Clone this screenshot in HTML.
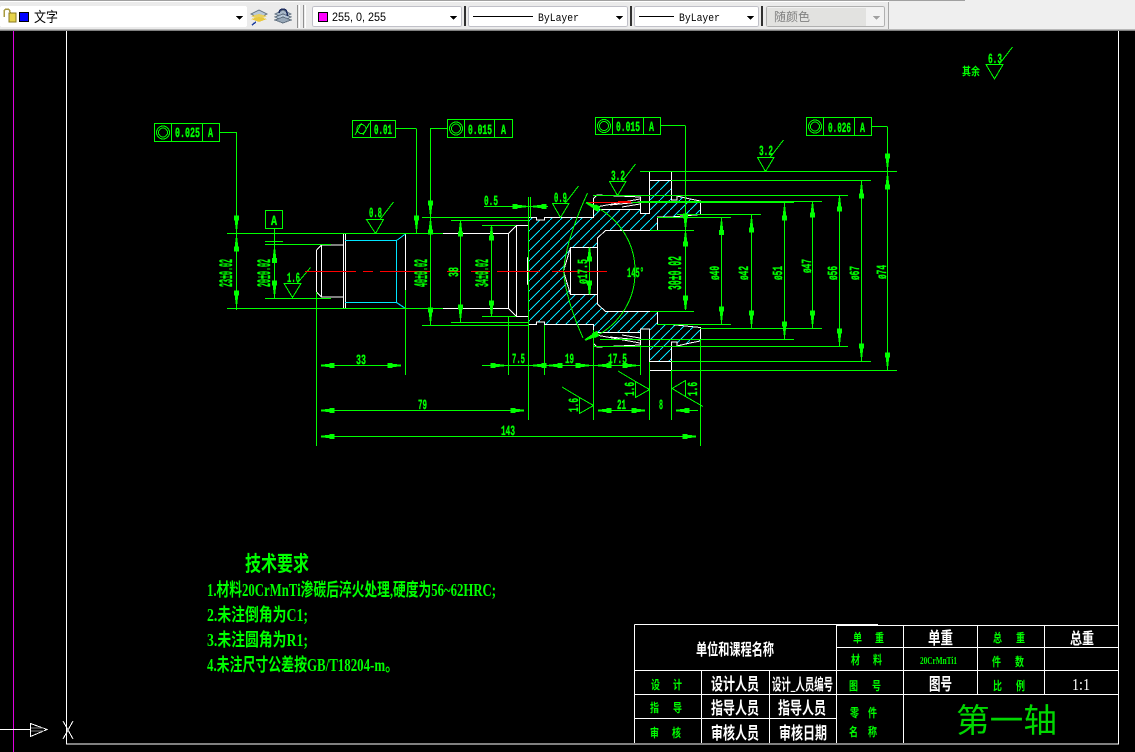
<!DOCTYPE html>
<html lang="zh"><head><meta charset="utf-8"><title>CAD</title>
<style>
html,body{margin:0;padding:0;background:#000;overflow:hidden}
svg{display:block}
text{font-family:"Liberation Sans","WenQuanYi Zen Hei","Noto Sans CJK SC",sans-serif}
.g{stroke:#00ff00;fill:none}
.w{stroke:#fff;fill:none}
.c{stroke:#00e5ff;fill:none}
.r{stroke:#ff0000;fill:none}
.t text{fill:#00ff00;font-weight:bold}
.n text{fill:#fff;font-weight:bold}
.dim text{fill:#00ff00;stroke:#00ff00;stroke-width:.35px;font-family:"Liberation Mono",monospace;font-weight:bold;font-size:14px}
.cjk text{font-family:"Liberation Serif","WenQuanYi Zen Hei","Noto Sans CJK SC",sans-serif}
</style></head><body>
<svg width="1135" height="752" viewBox="0 0 1135 752" xmlns="http://www.w3.org/2000/svg" shape-rendering="crispEdges">
<defs>
<path id="a" d="M-2.5,-13.5h5v5h-.8l-.9,8.5h-1.600l-.9,-8.500h-.8z" fill="#00ff00"/>
<pattern id="h" width="10" height="10" patternUnits="userSpaceOnUse"><path d="M0,10L10,0" stroke="#00e5ff" stroke-width="1" fill="none"/></pattern>
<g id="con"><circle cx="0" cy="0" r="6.5" class="g"/><circle cx="0" cy="0" r="4.500" class="g"/></g>
<path id="da" d="M0,0h7l-3.5,4z" fill="#000"/>
</defs>

<!-- toolbar -->
<rect x="0" y="0" width="1135" height="31" fill="#efefef"/>
<rect x="0" y="0" width="965" height="1" fill="#a0a0a0"/>
<rect x="0" y="1" width="889" height="1" fill="#fff"/>
<rect x="0" y="2" width="889" height="27" fill="#ebebeb"/>
<rect x="889" y="2" width="246" height="27" fill="#efefef"/>
<rect x="0" y="29" width="1135" height="1" fill="#b8b8b8"/>
<rect x="0" y="30" width="1135" height="1" fill="#808080"/>
<rect x="888" y="2" width="1" height="27" fill="#a8a8a8"/>

<rect x="0" y="6" width="247" height="21" fill="#fff" rx="2"/>
<path d="M4,17v-5a3,3 0 0 1 6,0v1" stroke="#a89a40" stroke-width="1.5" fill="none"/>
<rect x="9" y="13" width="7" height="9" fill="#e6d34a" stroke="#8a7a20"/>
<rect x="19.500" y="12.500" width="9" height="9" fill="#0000ff" stroke="#000"/>
<text x="34" y="22" font-size="14" style="font-family:'WenQuanYi Zen Hei','Noto Sans CJK SC',sans-serif" fill="#000" textLength="24" lengthAdjust="spacingAndGlyphs">文字</text>
<use href="#da" x="236" y="16"/>
<path d="M251,14l8,-4 8,4 -8,4z" fill="#b8c8d8" stroke="#607080"/><path d="M251,16l8,4 8,-4 -8,-2z" fill="#e8d060"/><path d="M251,19l8,3 8,-3 -8,-2z" fill="#e8c840"/><path d="M252,25l4,-3" stroke="#2040a0" stroke-width="1.500"/>
<path d="M275,14l8,-4 8,4 -8,4z" fill="#a8b8c8" stroke="#607080"/><path d="M275,17l8,4 8,-4-8,-3z" fill="#b8c8d8" stroke="#607080"/><path d="M275,20l8,3 8,-3-8,-3z" fill="#98a8b8" stroke="#607080"/><path d="M279,13a4,4 0 0 1 8,0v3" stroke="#203060" fill="none" stroke-width="1.500"/>
<rect x="297" y="5" width="1" height="23" fill="#909090"/><rect x="299" y="5" width="1" height="23" fill="#fff"/><rect x="303" y="5" width="1" height="23" fill="#909090"/><rect x="305" y="5" width="1" height="23" fill="#fff"/>

<rect x="312.500" y="6.500" width="149" height="20" fill="#fff" stroke="#c0c0c8" rx="2"/>
<rect x="318.500" y="12.500" width="9" height="9" fill="#ff00ff" stroke="#000"/>
<text x="332" y="21" font-size="12" fill="#000" textLength="54" lengthAdjust="spacingAndGlyphs">255, 0, 255</text>
<use href="#da" x="450" y="16"/>
<rect x="464" y="6" width="2" height="20" fill="#303030"/>

<rect x="468.500" y="6.500" width="159" height="20" fill="#fff" stroke="#c0c0c8" rx="2"/>
<rect x="473" y="16" width="60" height="1" fill="#000"/>
<text x="538" y="21" font-size="11" fill="#000" style="font-family:'Liberation Mono',monospace" textLength="41" lengthAdjust="spacingAndGlyphs">ByLayer</text>
<use href="#da" x="616" y="16"/>
<rect x="630" y="6" width="2" height="20" fill="#303030"/>

<rect x="634.500" y="6.500" width="124" height="20" fill="#fff" stroke="#c0c0c8" rx="2"/>
<rect x="639" y="16" width="35" height="1" fill="#000"/>
<text x="679" y="21" font-size="11" fill="#000" style="font-family:'Liberation Mono',monospace" textLength="41" lengthAdjust="spacingAndGlyphs">ByLayer</text>
<use href="#da" x="747" y="16"/>
<rect x="761" y="6" width="2" height="20" fill="#303030"/>

<rect x="766.500" y="6.500" width="118" height="20" fill="#f2f2f2" stroke="#b0b0b0" rx="2"/>
<rect x="767" y="8" width="99" height="18" fill="#e2e2e0"/>
<text x="774" y="21" font-size="12" fill="#808080" style="font-family:'WenQuanYi Zen Hei','Noto Sans CJK SC',sans-serif" textLength="36" lengthAdjust="spacingAndGlyphs">随颜色</text>
<path d="M873,16h7l-3.500,4z" fill="#a0a0a0"/>

<!-- canvas -->
<rect x="0" y="31" width="1135" height="721" fill="#000"/>
<path d="M13.500,31V752" stroke="#e000e0"/>
<path class="w" d="M66.500,31V744H1118.500V31"/>
<path class="w" d="M0,729.500H31M30.500,723.500V736.500L47,729.500z"/>
<path d="M31,728H44M31,731H44" stroke="#808080"/>
<path class="w" d="M63,721L73,739M73,721L63,739"/>

<!-- part: hatch -->
<path fill="url(#h)" d="M528,225V217.500H536.500V220H544.500V217.500H593.500V209.500H640.500V213H649.500V180.500H671.500V200H677V196L690,199 700.500,201V214.500L671,217L657.500,217.500V230.500H605.500L597.500,238V247.500H570.500L563.500,271 570.500,294.500H597.500V304L605.500,311.500H657.500V324.500L671,325 700.500,327.500V341L690,343 677,346V342H671.500V361.500H649.500V329H640.500V332.500H593.500V324.500H544.500V322H536.500V324.500H528V285L527,271 528,257z"/>

<g class="w">
<path d="M316.500,250L321.500,245H343.500M316.500,250V292L321.500,297H343.500M321.500,245V297M343.500,234V308M345.500,234V308"/>
<path d="M405.500,234V290"/>
<path d="M443,233.500H508.500L516.500,225.500H528.500V217.500H536.500V220H544.500V217.500H593.500V198.500L597,195 640.500,197V213.500H649.500V180.500V171.500H671.500V200H677V196L690,199 700.500,201V214.500L671,217H657.500V230.500H605.500L597.500,238V247.500H570.500L563.500,271 570.500,294.500H597.500V304L605.500,311.500H657.500V324.500H671L700.500,327.500V341L690,343 677,346V342H671.500V370.500H649.500V329H640.500V345L597,347 593.500,343.500V324.500H544.500V322H536.500V324.500H528.500V316.500H516.500L508.500,308.500H443"/>
<path d="M508.500,233.500V308.500M516.500,225.500V316.500M528.500,225V257L527.500,258V284L528.500,285V317M570.500,247.500V294.500M597.500,247.500V294.500M649.500,180.500H671.500M649.500,361.500H671.500"/>
<path d="M596,207L640,199M610,205L640,202M622,207L640,204M596,335L640,343M610,337L640,340M622,335L640,338M593.500,209.500H640.500M593.500,332.500H640.500"/>
</g>
<g class="c">
<path d="M345,240.500H396.500L405.500,234M396.500,240.500V302.500M345,302.500H396.500L405.500,308.500"/>
</g>

<!-- green lines -->
<g class="g">
<path d="M227,233.500H443M227,308.500H443M265,244.500H331M265,298.500H331"/>
<path d="M236.500,132V310M274.500,229V298M265,241.500H283M416.500,128.500V233M430.500,128.500V325"/>
<path d="M422,217.500H528M422,325.500H528M451,220.500H528M451,322.500H528M482,225.500H516M482,316.500H516"/>
<path d="M460.500,221V322M491.500,226V316M484,206.500H548M528.500,197V350M530.500,197V218"/>
<path d="M316.500,292V446M405.500,290V375M508.500,316V375M528.500,316V420M544.500,325V375M593.500,330V420M640.500,345V375M649.500,362V420M671.500,370V420M700.500,340V446"/>
<path d="M321,365.500H401M482,365.500H640M321,410.500H524M598,410.500H645M676,410.500H698M321,436.500H696"/>
<path d="M640,171.500H897M671,180.500H871M593,195.500H848M632,202.500H794M640,201.500H822M657,217.500H731M677,214.500H761M650,230.500H694M650,311.500H694M657,324.500H731M700,328.500H822M600,339.500H794M593,346.500H848M671,361.500H871M671,370.500H897"/>
<path d="M685.500,125.500V310M721.500,217.500V324M751.500,214.500V328M784.500,202V339M812.500,201V328M839.500,195V346M861.500,180V361M887.500,126.500V370"/>
<path d="M589.500,247.500V294.500"/>
<path d="M219,132.500H236M395,128.500H416M447,128.500H430M661,125.500H685M871,126.500H887"/>
<!-- frames -->
<path d="M154.500,123.500H219.500V141.500H154.500zM171.500,123.500V141.500M202.500,123.500V141.500"/>
<path d="M352.500,120.500H395.500V137.500H352.500zM370.500,120.500V137.500M355,135L361.500,123M363,135L369.500,123"/>
<circle cx="361.500" cy="129" r="4.500"/>
<path d="M447.500,119.500H512.500V137.500H447.500zM464.500,119.500V137.500M494.500,119.500V137.500"/>
<path d="M595.500,117.500H660.500V134.500H595.500zM612.500,117.500V134.500M643.500,117.500V134.500"/>
<path d="M806.500,117.500H871.500V135.500H806.500zM823.500,117.500V135.500M854.500,117.500V135.500"/>
<path d="M265.500,210.500H282.500V228.500H265.500z"/>
<!-- finish marks -->
<path d="M284,283.500H301L292.500,297.500zM297,283.500L310.500,267.500"/>
<path d="M366.500,219.500H383.500L375.500,233.500zM380,219.500L393.500,202"/>
<path d="M552.500,203.500H569L560.500,217.500zM565,203.500L578.500,186"/>
<path d="M609.500,181.500H626L617.500,195.500zM622,181.500L635.500,164"/>
<path d="M757.500,157.500H774L765.500,171.500zM770,157.500L783.500,140"/>
<path d="M986,64.500H1003L994.500,79zM999,64.500L1012.500,47"/>
<path d="M579.500,397.500V413.500L593.500,405.500zM579.500,397.500L562,387"/>
<path d="M635.500,381.500V397.500L649.500,389.500zM635.500,381.500L618,371"/>
<path d="M685.500,380.500V396.500L672,388.500zM685.500,396.500L703,406.500"/>
<!-- arcs -->
<path d="M586,203A71,71 0 0 1 635,271A71,71 0 0 1 586,340"/>
<path d="M587.500,193Q566,240 563.500,271Q566,300 583,338"/>
</g>
<g class="r">
<path d="M305,271.500H356M363,271.500H373M380,271.500H430M447,271.500H460M471,271.500H490M497,271.500H540M552,271.500H607"/>
<path d="M588,202.500H631M618,201.500H631"/>
</g>
<use href="#con" x="163" y="132.500"/>
<use href="#con" x="456" y="128.500"/><use href="#con" x="604" y="126"/><use href="#con" x="815" y="126.500"/>

<!-- arrows -->
<g>
<use href="#a" transform="translate(236.500,229)"/><use href="#a" transform="translate(236.500,238) rotate(180)"/><use href="#a" transform="translate(236.500,304)"/>
<use href="#a" transform="translate(274.500,249.500) rotate(180)"/><use href="#a" transform="translate(274.500,294)"/>
<use href="#a" transform="translate(416.500,229)"/>
<use href="#a" transform="translate(430.500,214)"/><use href="#a" transform="translate(430.500,221) rotate(180)"/><use href="#a" transform="translate(430.500,321)"/>
<use href="#a" transform="translate(460.500,223) rotate(180)"/><use href="#a" transform="translate(460.500,318)"/>
<use href="#a" transform="translate(491.500,227) rotate(180)"/><use href="#a" transform="translate(491.500,314)"/>
<use href="#a" transform="translate(526,206.500) rotate(-90)"/><use href="#a" transform="translate(533,206.500) rotate(90)"/>
<use href="#a" transform="translate(589.500,248) rotate(180)"/><use href="#a" transform="translate(589.500,294)"/>
<use href="#a" transform="translate(685.500,227)"/><use href="#a" transform="translate(685.500,233) rotate(180)"/><use href="#a" transform="translate(685.500,309)"/>
<use href="#a" transform="translate(721.500,221.500) rotate(180)"/><use href="#a" transform="translate(721.500,320)"/>
<use href="#a" transform="translate(751.500,219) rotate(180)"/><use href="#a" transform="translate(751.500,324)"/>
<use href="#a" transform="translate(784.500,207) rotate(180)"/><use href="#a" transform="translate(784.500,335)"/>
<use href="#a" transform="translate(812.500,204) rotate(180)"/><use href="#a" transform="translate(812.500,324)"/>
<use href="#a" transform="translate(839.500,198) rotate(180)"/><use href="#a" transform="translate(839.500,342)"/>
<use href="#a" transform="translate(861.500,185) rotate(180)"/><use href="#a" transform="translate(861.500,357)"/>
<use href="#a" transform="translate(887.500,167)"/><use href="#a" transform="translate(887.500,176) rotate(180)"/><use href="#a" transform="translate(887.500,366)"/>
<use href="#a" transform="translate(321,365.500) rotate(90)"/><use href="#a" transform="translate(401,365.500) rotate(-90)"/>
<use href="#a" transform="translate(504,365.500) rotate(-90)"/><use href="#a" transform="translate(533,365.500) rotate(90)"/>
<use href="#a" transform="translate(549,365.500) rotate(90)"/><use href="#a" transform="translate(589,365.500) rotate(-90)"/>
<use href="#a" transform="translate(598,365.500) rotate(90)"/><use href="#a" transform="translate(636,365.500) rotate(-90)"/>
<use href="#a" transform="translate(321,410.500) rotate(90)"/><use href="#a" transform="translate(524,410.500) rotate(-90)"/>
<use href="#a" transform="translate(598,410.500) rotate(90)"/><use href="#a" transform="translate(645,410.500) rotate(-90)"/>
<use href="#a" transform="translate(676,410.500) rotate(90)"/>
<use href="#a" transform="translate(321,436.500) rotate(90)"/><use href="#a" transform="translate(696,436.500) rotate(-90)"/>
<use href="#a" transform="translate(586,202.500) rotate(117) scale(1.1)" /><use href="#a" transform="translate(585,340) rotate(63) scale(1.1)"/>
</g>

<!-- dimension text -->
<g class="dim" text-rendering="geometricPrecision">
<text x="175" y="137" textLength="25" lengthAdjust="spacingAndGlyphs">0.025</text>
<text x="208" y="137" textLength="5" lengthAdjust="spacingAndGlyphs">A</text>
<text x="374" y="134" textLength="18" lengthAdjust="spacingAndGlyphs">0.01</text>
<text x="468" y="134" textLength="24" lengthAdjust="spacingAndGlyphs">0.015</text>
<text x="501" y="134" textLength="5" lengthAdjust="spacingAndGlyphs">A</text>
<text x="616" y="131" textLength="24" lengthAdjust="spacingAndGlyphs">0.015</text>
<text x="649" y="131" textLength="5" lengthAdjust="spacingAndGlyphs">A</text>
<text x="828" y="132" textLength="23" lengthAdjust="spacingAndGlyphs">0.026</text>
<text x="860" y="132" textLength="5" lengthAdjust="spacingAndGlyphs">A</text>
<text x="271" y="225" textLength="6" lengthAdjust="spacingAndGlyphs">A</text>
<text x="287" y="282" textLength="13" lengthAdjust="spacingAndGlyphs">1.6</text>
<text x="369" y="217" textLength="13" lengthAdjust="spacingAndGlyphs">0.8</text>
<text x="484" y="205" textLength="14" lengthAdjust="spacingAndGlyphs">0.5</text>
<text x="554" y="202" textLength="13" lengthAdjust="spacingAndGlyphs">0.9</text>
<text x="611" y="180" textLength="14" lengthAdjust="spacingAndGlyphs">3.2</text>
<text x="759" y="155" textLength="14" lengthAdjust="spacingAndGlyphs">3.2</text>
<text x="988" y="63" textLength="14" lengthAdjust="spacingAndGlyphs">6.3</text>
<text x="627" y="277" textLength="17" lengthAdjust="spacingAndGlyphs">145°</text>
<text x="356" y="364" textLength="10" lengthAdjust="spacingAndGlyphs">33</text>
<text x="512" y="363" textLength="13" lengthAdjust="spacingAndGlyphs">7.5</text>
<text x="565" y="363" textLength="9" lengthAdjust="spacingAndGlyphs">19</text>
<text x="608" y="363" textLength="19" lengthAdjust="spacingAndGlyphs">17.5</text>
<text x="418" y="409" textLength="9" lengthAdjust="spacingAndGlyphs">79</text>
<text x="617" y="409" textLength="9" lengthAdjust="spacingAndGlyphs">21</text>
<text x="659" y="409" textLength="4" lengthAdjust="spacingAndGlyphs">8</text>
<text x="501" y="435" textLength="14" lengthAdjust="spacingAndGlyphs">143</text>
<text transform="translate(458,277) rotate(-90)" textLength="10" lengthAdjust="spacingAndGlyphs">38</text>
<text transform="translate(587,284) rotate(-90)" textLength="25" lengthAdjust="spacingAndGlyphs">ø17.5</text>
<text transform="translate(719,280) rotate(-90)" textLength="14" lengthAdjust="spacingAndGlyphs">ø40</text>
<text transform="translate(748,280) rotate(-90)" textLength="14" lengthAdjust="spacingAndGlyphs">ø42</text>
<text transform="translate(782,280) rotate(-90)" textLength="14" lengthAdjust="spacingAndGlyphs">ø51</text>
<text transform="translate(811,273) rotate(-90)" textLength="14" lengthAdjust="spacingAndGlyphs">ø47</text>
<text transform="translate(837,280) rotate(-90)" textLength="14" lengthAdjust="spacingAndGlyphs">ø56</text>
<text transform="translate(859,280) rotate(-90)" textLength="14" lengthAdjust="spacingAndGlyphs">ø67</text>
<text transform="translate(886,279) rotate(-90)" textLength="14" lengthAdjust="spacingAndGlyphs">ø74</text>
<text transform="translate(578,412) rotate(-90)" textLength="14" lengthAdjust="spacingAndGlyphs">1.6</text>
<text transform="translate(634,396) rotate(-90)" textLength="14" lengthAdjust="spacingAndGlyphs">1.6</text>
<text transform="translate(697,396) rotate(-90)" textLength="14" lengthAdjust="spacingAndGlyphs">1.6</text>
<text style="font-size:19px" transform="translate(232,287) rotate(-90)" textLength="28" lengthAdjust="spacingAndGlyphs">23±0.02</text>
<text style="font-size:19px" transform="translate(270,287) rotate(-90)" textLength="28" lengthAdjust="spacingAndGlyphs">20±0.02</text>
<text style="font-size:19px" transform="translate(427,287) rotate(-90)" textLength="28" lengthAdjust="spacingAndGlyphs">40±0.02</text>
<text style="font-size:19px" transform="translate(488,287) rotate(-90)" textLength="28" lengthAdjust="spacingAndGlyphs">34±0.02</text>
<text style="font-size:19px" transform="translate(681,290) rotate(-90)" textLength="34" lengthAdjust="spacingAndGlyphs">30±0.02</text>
</g>

<!-- CJK green notes -->
<g class="t cjk">
<text x="962" y="75" font-size="11" textLength="18" lengthAdjust="spacingAndGlyphs">其余</text>
<text x="245" y="571" font-size="21" textLength="64" lengthAdjust="spacingAndGlyphs">技术要求</text>
<text x="207" y="596" font-size="18" textLength="289" lengthAdjust="spacingAndGlyphs">1.材料20CrMnTi渗碳后淬火处理,硬度为56~62HRC;</text>
<text x="207" y="621" font-size="18" textLength="101" lengthAdjust="spacingAndGlyphs">2.未注倒角为C1;</text>
<text x="207" y="646" font-size="18" textLength="101" lengthAdjust="spacingAndGlyphs">3.未注圆角为R1;</text>
<text x="207" y="671" font-size="18" textLength="191" lengthAdjust="spacingAndGlyphs">4.未注尺寸公差按GB/T18204-m。</text>

<g font-size="12">
<text x="853" y="642" textLength="9" lengthAdjust="spacingAndGlyphs">单</text><text x="875" y="642" textLength="9" lengthAdjust="spacingAndGlyphs">重</text>
<text x="993" y="642" textLength="9" lengthAdjust="spacingAndGlyphs">总</text><text x="1016" y="642" textLength="9" lengthAdjust="spacingAndGlyphs">重</text>
<text x="851" y="664" textLength="9" lengthAdjust="spacingAndGlyphs">材</text><text x="873" y="664" textLength="9" lengthAdjust="spacingAndGlyphs">料</text>
<text x="992" y="666" textLength="9" lengthAdjust="spacingAndGlyphs">件</text><text x="1015" y="666" textLength="9" lengthAdjust="spacingAndGlyphs">数</text>
<text x="651" y="689" textLength="9" lengthAdjust="spacingAndGlyphs">设</text><text x="673" y="689" textLength="9" lengthAdjust="spacingAndGlyphs">计</text>
<text x="849" y="690" textLength="9" lengthAdjust="spacingAndGlyphs">图</text><text x="872" y="690" textLength="9" lengthAdjust="spacingAndGlyphs">号</text>
<text x="993" y="690" textLength="9" lengthAdjust="spacingAndGlyphs">比</text><text x="1016" y="690" textLength="9" lengthAdjust="spacingAndGlyphs">例</text>
<text x="650" y="712" textLength="9" lengthAdjust="spacingAndGlyphs">指</text><text x="673" y="712" textLength="9" lengthAdjust="spacingAndGlyphs">导</text>
<text x="650" y="737" textLength="9" lengthAdjust="spacingAndGlyphs">审</text><text x="672" y="737" textLength="9" lengthAdjust="spacingAndGlyphs">核</text>
<text x="850" y="717" textLength="9" lengthAdjust="spacingAndGlyphs">零</text><text x="868" y="717" textLength="9" lengthAdjust="spacingAndGlyphs">件</text>
<text x="849" y="736" textLength="9" lengthAdjust="spacingAndGlyphs">名</text><text x="868" y="736" textLength="9" lengthAdjust="spacingAndGlyphs">称</text>
</g>
<text x="920" y="664" font-size="11" textLength="37" lengthAdjust="spacingAndGlyphs">20CrMnTi1</text>
<text x="956" y="732" font-size="33" style="font-weight:normal;fill:#00d800" textLength="101" lengthAdjust="spacingAndGlyphs">第一轴</text>
</g>

<!-- title block -->
<g class="w">
<path d="M634.500,624.500H878M634.500,624.500V743M836.500,625.500H1118M836.500,647.500H1118M634.500,670.500H1118M634.500,694.500H1118M634.500,718.500H836.500"/>
<path d="M836.500,624.500V743M903.500,625V743M977.500,625V694M1044.500,625V694M701.500,670V743M769.500,670V743"/>
</g>
<g class="n cjk">
<text x="696" y="655" font-size="16" textLength="78" lengthAdjust="spacingAndGlyphs">单位和课程名称</text>
<text x="928" y="644" font-size="17" textLength="25" lengthAdjust="spacingAndGlyphs">单重</text>
<text x="1070" y="644" font-size="16" textLength="24" lengthAdjust="spacingAndGlyphs">总重</text>
<text x="711" y="690" font-size="17" textLength="48" lengthAdjust="spacingAndGlyphs">设计人员</text>
<text x="772" y="690" font-size="16" textLength="61" lengthAdjust="spacingAndGlyphs">设计_人员编号</text>
<text x="929" y="690" font-size="17" textLength="23" lengthAdjust="spacingAndGlyphs">图号</text>
<text x="1072" y="690" font-size="17" style="font-weight:normal" textLength="18" lengthAdjust="spacingAndGlyphs">1:1</text>
<text x="711" y="714" font-size="17" textLength="48" lengthAdjust="spacingAndGlyphs">指导人员</text>
<text x="778" y="714" font-size="17" textLength="48" lengthAdjust="spacingAndGlyphs">指导人员</text>
<text x="711" y="739" font-size="17" textLength="48" lengthAdjust="spacingAndGlyphs">审核人员</text>
<text x="779" y="739" font-size="17" textLength="48" lengthAdjust="spacingAndGlyphs">审核日期</text>
</g>
</svg>
</body></html>
